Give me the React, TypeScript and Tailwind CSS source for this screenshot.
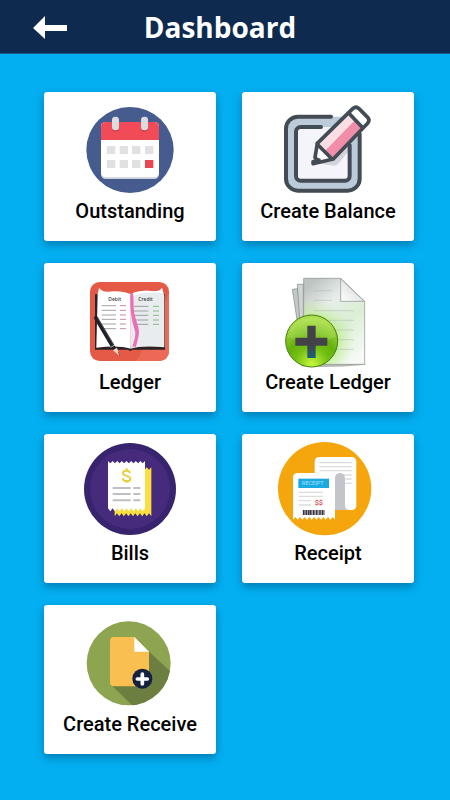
import React from 'react';

interface MenuItem {
  label: string;
  icon: React.ReactNode;
}

// Torn paper edge running from (from, y) to (to, y)
const tornEdge = (from: number, to: number, y: number, teeth: number, depth: number) => {
  const step = (to - from) / teeth;
  let d = '';
  for (let i = 0; i < teeth; i++) {
    d += `L${from + step * (i + 0.5)} ${y + depth}L${from + step * (i + 1)} ${y}`;
  }
  return d;
};

const CalendarIcon: React.FC = () => (
  <svg viewBox="150 54 300 300" className="size-[100px]" aria-hidden="true">
    <ellipse cx="300" cy="210" rx="131" ry="129" fill="#465c8f" />
    <rect x="213" y="132" width="174" height="165" rx="14" fill="#cfd1d8" />
    <rect x="213" y="126" width="174" height="166" rx="14" fill="#fff" />
    <path d="M213 180v-40a14 14 0 0 1 14-14h146a14 14 0 0 1 14 14v40z" fill="#f14b57" />
    <rect x="246" y="115" width="21" height="40" rx="10" fill="#c43f4c" />
    <rect x="333" y="115" width="21" height="40" rx="10" fill="#c43f4c" />
    <rect x="246" y="110" width="21" height="41" rx="10" fill="#dcdbe0" />
    <rect x="333" y="110" width="21" height="41" rx="10" fill="#dcdbe0" />
    {[231, 269, 306, 345].map((x) => (
      <rect key={x} x={x} y="198" width="25" height="24" fill="#e1e1e2" />
    ))}
    {[231, 269, 306].map((x) => (
      <rect key={x} x={x} y="240" width="25" height="24" fill="#e1e1e2" />
    ))}
    <rect x="345" y="240" width="25" height="24" fill="#ec4653" />
  </svg>
);

const EditIcon: React.FC = () => (
  <svg viewBox="144 54 300 300" className="size-[100px]" aria-hidden="true">
    <path d="M204 110h136l49 52v134a36 36 0 0 1-36 36H204a36 36 0 0 1-36-36V146a36 36 0 0 1 36-36z" fill="#bccbd9" />
    <rect x="198" y="141" width="161" height="161" rx="12" fill="#f5f4fa" />
    <path d="M270 251l44-12 43-43v16l-30 36q-6 9-16 9z" fill="#d3d3da" />
    <g fill="none" stroke="#434b54" strokeWidth="12" strokeLinecap="round" strokeLinejoin="round">
      <path d="M303 110H204a36 36 0 0 0-36 36v150a36 36 0 0 0 36 36h149a36 36 0 0 0 36-36V162" />
      <path d="M273 141h-61a14 14 0 0 0-14 14v133a14 14 0 0 0 14 14h133a14 14 0 0 0 14-14v-92" />
    </g>
    <path d="M262 190L369 85q9-7 18 1l26 26q8 9 0 18L310 237l-50 8-5-12z" fill="#fff" />
    <path d="M264 193l92-94 20 20-92 95z" fill="#f9dfe5" />
    <path d="M284 214l92-95 20 22-88 96z" fill="#f08da8" />
    <g fill="none" stroke="#434b54" strokeWidth="11" strokeLinecap="round" strokeLinejoin="round">
      <path d="M262 190L369 85q9-7 18 1l26 26q8 9 0 18L310 237l-61 14" />
      <path d="M262 190l-7 43 10 10" />
      <path d="M264 195l42 42M356 99l40 42" />
      <path d="M249 245l18-5" />
    </g>
  </svg>
);

const LedgerIcon: React.FC = () => (
  <svg viewBox="150 42 300 300" className="size-[100px]" aria-hidden="true">
    <rect x="180" y="81" width="237" height="237" rx="29" fill="#e55947" />
    <path d="M330 300L417 115v174a29 29 0 0 1-29 29h-70z" fill="#ed6855" />
    <path d="M195 118h14v156h182V118h14v166H308l-7 4-8-4h-98z" fill="#292326" />
    <path d="M207 99q8 11 25 11 47-4 70 8v163q-38-12-103-3l4-160z" fill="#fff" />
    <path d="M302 118q20-13 63-10 23 3 31-9l7 23v155q-67-6-101 4z" fill="#e9ecef" />
    <path d="M302 118q20-13 63-10 23 3 31-9l3 16q-59-8-97 13z" fill="#fff" />
    <g fontFamily="Noto Sans, sans-serif" fontSize="15" fontWeight="500" fill="#37333b">
      <text x="235" y="137">Debit</text>
      <text x="325" y="138">Credit</text>
    </g>
    {[152, 166, 180, 193, 207, 221].map((y) => (
      <g key={y} strokeWidth="2">
        <path d={`M215 ${y}h43`} stroke="#77777a" />
        <path d={`M270 ${y}h18`} stroke="#b94f60" />
      </g>
    ))}
    {[154, 168, 181, 195, 208].map((y) => (
      <g key={y} strokeWidth="2">
        <path d={`M312 ${y}h43`} stroke="#77777a" />
        <path d={`M369 ${y}h18`} stroke="#4ca84d" />
      </g>
    ))}
    <path d="M301 114h7c5 8 0 42 7 70 7 26 16 41 10 63l-8 31-4-5-6 6c4-24 13-35 7-55-12-38-14-71-13-110z" fill="#ec6eb5" />
    <path d="M198 189l52 88" stroke="#202126" strokeWidth="12" strokeLinecap="round" />
    <path d="M204 190l48 82" stroke="#62656d" strokeWidth="2" />
    <path d="M242 277l14-8" stroke="#fff" strokeWidth="2" />
    <path d="M249 286l12-8 8 25z" fill="#f8d4c7" />
    <path d="M265 291l4 12" stroke="#6b4b45" strokeWidth="2" />
  </svg>
);

const AddPageIcon: React.FC = () => (
  <svg viewBox="144 42 300 300" className="size-[100px]" aria-hidden="true">
    <defs>
      <linearGradient id="page" x1="0.2" y1="0" x2="0.8" y2="1">
        <stop offset="0" stopColor="#bcc3c0" />
        <stop offset="0.3" stopColor="#e7edea" />
        <stop offset="0.6" stopColor="#dbefd5" />
        <stop offset="1" stopColor="#f7faf7" />
      </linearGradient>
      <linearGradient id="fold" x1="0" y1="1" x2="0.6" y2="0.4">
        <stop offset="0" stopColor="#fff" />
        <stop offset="1" stopColor="#dfe2e3" />
      </linearGradient>
      <radialGradient id="glow">
        <stop offset="0.6" stopColor="#a4ed54" stopOpacity="0.5" />
        <stop offset="1" stopColor="#b9ee86" stopOpacity="0" />
      </radialGradient>
      <radialGradient id="ball" cx="0.5" cy="0.95" r="0.85">
        <stop offset="0" stopColor="#c8f63e" />
        <stop offset="0.4" stopColor="#70bd12" />
        <stop offset="0.6" stopColor="#65b10c" />
        <stop offset="1" stopColor="#a8dc45" />
      </radialGradient>
      <linearGradient id="plus" x1="0" y1="0" x2="0" y2="1">
        <stop offset="0.6" stopColor="#444249" />
        <stop offset="1" stopColor="#176080" />
      </linearGradient>
      <clipPath id="sheet">
        <path d="M221 70h111l72 69v189H221z" />
      </clipPath>
    </defs>
    <path d="M187 103l16-2 12 100h-13z" fill="#c2c7c7" stroke="#7e8785" strokeWidth="2" />
    <path d="M202 88h18v103h-11z" fill="#d0d5d3" stroke="#7e8785" strokeWidth="2" />
    <path d="M212 334q95 5 198-5l-20-5H220z" fill="#b5b8b5" />
    <path d="M221 70h111l72 69v189H221z" fill="url(#page)" stroke="#858d8a" strokeWidth="2" />
    <circle cx="245" cy="258" r="125" fill="url(#glow)" clipPath="url(#sheet)" />
    <path d="M332 71v68h71z" fill="url(#fold)" stroke="#858d8a" strokeWidth="2" />
    <path d="M251 107h55M251 136h55M251 167h120M270 196h101M300 225h71M315 254h56M318 283h53" stroke="#b9c3ba" strokeWidth="2" />
    <circle cx="245" cy="258" r="78" fill="url(#ball)" stroke="#47821a" strokeWidth="3" />
    <path d="M174 246a72 72 0 0 1 142 0q-66 29-142 0z" fill="#caee86" opacity="0.25" />
    <path d="M232 212h25v36h35v24h-35v37h-25v-37h-36v-24h36z" fill="url(#plus)" />
  </svg>
);

const BillsIcon: React.FC = () => (
  <svg viewBox="150 45 300 300" className="size-[100px]" aria-hidden="true">
    <circle cx="300" cy="192" r="138" fill="#38246e" />
    <circle cx="300" cy="192" r="120" fill="#462b7d" />
    <path d={`M254 127${tornEdge(254, 364, 127, 8, 7)}V274${tornEdge(364, 254, 274, 8, -9)}z`} fill="#fade42" />
    <path d={`M234 108${tornEdge(234, 345, 108, 8, 7)}V250${tornEdge(345, 234, 250, 8, 9)}z`} fill="#fff" />
    <path d="M300 144c-2-8-20-10-21 0 0 10 22 7 22 17s-20 12-23-1M290 130v9M290 165v8" fill="none" stroke="#e8cf3d" strokeWidth="6" />
    <path d="M248 189h54M310 189h21M248 207h54M310 207h21M248 226h54M310 226h21" stroke="#bfbfc4" strokeWidth="6" />
  </svg>
);

const ReceiptIcon: React.FC = () => (
  <svg viewBox="144 45 300 300" className="size-[100px]" aria-hidden="true">
    <circle cx="284" cy="191" r="140" fill="#f5a60d" />
    <path d="M254 109a13 13 0 0 1 13-13h99a13 13 0 0 1 13 13v133a13 13 0 0 1-13 13h-66V160h-46z" fill="#fff" />
    <path d="M268 113h97M268 125h97M268 137h97M340 150h25M346 162h19M346 175h19" stroke="#dcdcdf" strokeWidth="4" />
    <path d="M314 158q0-14 15-14 16 0 16 17v78q0 14 12 16h-43z" fill="#c4c5ca" />
    <path d={`M189 158q0-14 15-14h125q-14 1-14 16V284${tornEdge(315, 189, 284, 9, -8)}z`} fill="#fff" />
    <rect x="205" y="161" width="92" height="28" fill="#1ba9e1" />
    <text x="215" y="181" fontFamily="Roboto, sans-serif" fontSize="17" fill="#a8e2f6">RECEIPT</text>
    <path d="M206 202h73M206 214h73M206 227h37M206 240h37" stroke="#dcdcdf" strokeWidth="4" />
    <text x="254" y="241" fontFamily="Roboto, sans-serif" fontSize="22" fontWeight="500" fill="#d5484a">$$</text>
    <rect x="218" y="255" width="67" height="15" fill="#a4a3a9" />
    <path d="M221 255v15M229 255v15M236 255v15M242 255v15M251 255v15M260 255v15M270 255v15M278 255v15" stroke="#37343c" strokeWidth="4" />
  </svg>
);

const AddFileIcon: React.FC = () => (
  <svg viewBox="150 48 300 300" className="size-[100px]" aria-hidden="true">
    <defs>
      <clipPath id="disc">
        <circle cx="296" cy="205" r="126" />
      </clipPath>
    </defs>
    <circle cx="296" cy="205" r="126" fill="#8da451" />
    <path d="M356 169l100 92v120H358L244 270z" fill="#6d7f40" clipPath="url(#disc)" />
    <path d="M252 126h61l44 44v104H252a12 12 0 0 1-12-12V138a12 12 0 0 1 12-12z" fill="#f9bf50" />
    <path d="M313 126l44 44h-44z" fill="#fff" />
    <circle cx="337" cy="251" r="30" fill="#14213f" />
    <path d="M337 237v30M322 252h30" stroke="#fff" strokeWidth="11" strokeLinecap="round" />
  </svg>
);

const menuItems: MenuItem[] = [
  { label: 'Outstanding', icon: <CalendarIcon /> },
  { label: 'Create Balance', icon: <EditIcon /> },
  { label: 'Ledger', icon: <LedgerIcon /> },
  { label: 'Create Ledger', icon: <AddPageIcon /> },
  { label: 'Bills', icon: <BillsIcon /> },
  { label: 'Receipt', icon: <ReceiptIcon /> },
  { label: 'Create Receive', icon: <AddFileIcon /> },
];

const App: React.FC = () => {
  return (
    <div className="min-h-screen bg-[#03aff1]">
      <header className="grid h-[54px] grid-cols-[1fr_auto_1fr] items-center border-b border-[#155b8c] bg-[#0e2a4f] pr-[42px] pl-8">
        <button type="button" aria-label="Back" className="justify-self-start">
          <svg viewBox="0 0 36 24" className="h-6 w-9" fill="#fff" aria-hidden="true">
            <path d="M1 13L13 1v9h22v6H13v8z" />
          </svg>
        </button>
        <h1 className="font-['Open_Sans',sans-serif] text-[28px] leading-9 font-bold text-white">
          Dashboard
        </h1>
      </header>

      <main className="grid grid-cols-2 gap-x-[26px] gap-y-[22px] pt-[38px] pr-9 pb-11 pl-11">
        {menuItems.map((item) => (
          <button
            key={item.label}
            type="button"
            className="flex h-[149px] flex-col items-center rounded-[3px] bg-white pt-1.5 shadow-[0_4px_9px_rgba(0,50,90,0.4)]"
          >
            {item.icon}
            <span className="font-[Roboto,sans-serif] text-xl leading-[26px] font-medium whitespace-nowrap text-black">
              {item.label}
            </span>
          </button>
        ))}
      </main>
    </div>
  );
};

export default App;
